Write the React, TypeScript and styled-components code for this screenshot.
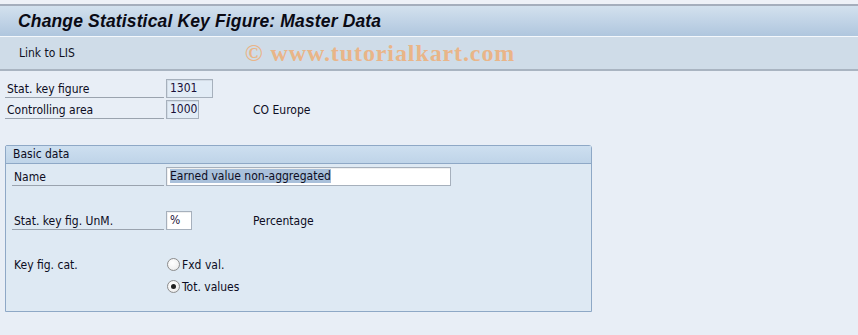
import styled, { createGlobalStyle } from 'styled-components'

const GlobalStyle = createGlobalStyle`
  html, body {
    margin: 0;
    padding: 0;
    background: #e8eef6;
  }
  body {
    font-family: Tahoma, "DejaVu Sans Condensed", "Liberation Sans", sans-serif;
    font-size: 12px;
    color: #0c0c22;
  }
`

const Page = styled.div`
  width: 858px;
  height: 335px;
  overflow: hidden;
  background: #e8eef6;
  display: flex;
  flex-direction: column;
`

const TopStrip = styled.div`
  height: 4px;
  background: #eef1f7;
  border-bottom: 2px solid #a5aebc;
`

const TitleBar = styled.div`
  height: 30px;
  display: flex;
  align-items: center;
  padding-left: 18px;
  background: linear-gradient(180deg, #d3e1ee 0%, #afc6de 100%);
  border-bottom: 1px solid #f4f8fc;
`

const Title = styled.h1`
  margin: 0;
  font-family: "Liberation Sans", Arial, sans-serif;
  font-size: 17.5px;
  font-weight: 700;
  font-style: italic;
  color: #0a0a14;
  letter-spacing: 0.15px;
`

const Toolbar = styled.div`
  height: 32px;
  display: flex;
  align-items: center;
  padding-left: 19px;
  background: #cfdce8;
  border-bottom: 2px solid #a9b4c1;
`

const ToolButton = styled.span`
  font-family: "DejaVu Sans Condensed", "Liberation Sans", sans-serif;
  font-size: 12px;
  color: #10101e;
`

const Watermark = styled.span`
  margin-left: 170px;
  font-family: "Liberation Serif", "Times New Roman", serif;
  font-weight: 700;
  font-size: 24px;
  letter-spacing: 0.9px;
  color: #e9b588;
`

const Content = styled.div`
  padding: 8px 0 0 5px;
  display: flex;
  flex-direction: column;
  gap: 2px;
`

const Row = styled.div`
  display: flex;
  align-items: center;
  height: 19px;
`

const Label = styled.div<{ $w: number; $plain?: boolean }>`
  width: ${p => p.$w}px;
  height: 19px;
  box-sizing: border-box;
  padding: 1px 0 0 2px;
  line-height: 18px;
  font-family: "DejaVu Sans Condensed", "Liberation Sans", sans-serif;
  font-size: 12px;
  border-bottom: 1px solid ${p => (p.$plain ? 'transparent' : '#9aa3ae')};
  flex-shrink: 0;
`

const Field = styled.div<{ $w: number; $white?: boolean }>`
  width: ${p => p.$w}px;
  height: 19px;
  box-sizing: border-box;
  margin-left: 2px;
  padding: 0 3px;
  line-height: 17px;
  font-family: "DejaVu Sans Condensed", "Liberation Sans", sans-serif;
  font-size: 12px;
  color: #1a1038;
  background: ${p => (p.$white ? '#ffffff' : '#e2ecf6')};
  border: 1px solid #a6b0bc;
  box-shadow: inset 1px 1px 0 ${p => (p.$white ? '#f0f0f0' : '#d3dce6')};
  flex-shrink: 0;
  white-space: nowrap;
  overflow: hidden;
`

const Selected = styled.span`
  background: #a9c0da;
  color: #0c0c22;
`

const Description = styled.span<{ $offset: number }>`
  margin-left: ${p => p.$offset}px;
  font-family: "DejaVu Sans Condensed", "Liberation Sans", sans-serif;
  font-size: 12px;
`

const GroupBox = styled.div`
  margin-top: 24px;
  width: 587px;
  box-sizing: border-box;
  border: 1px solid #8ea8c6;
  border-radius: 2px 3px 0 0;
  background: #dee9f3;
  padding-bottom: 15px;
`

const GroupHeader = styled.div`
  height: 17px;
  line-height: 17px;
  padding-left: 7px;
  background: linear-gradient(180deg, #cddff0 0%, #bfd4e8 100%);
  border-bottom: 1px solid #8ea8c6;
  font-family: "DejaVu Sans Condensed", "Liberation Sans", sans-serif;
  font-size: 12px;
`

const GroupBody = styled.div`
  padding: 3px 0 0 6px;
  display: flex;
  flex-direction: column;
  gap: 3px;
`

const Spacer = styled.div`
  height: 19px;
`

const RadioOption = styled.label`
  display: flex;
  align-items: center;
  gap: 2px;
  margin-left: 3px;
  font-family: "DejaVu Sans Condensed", "Liberation Sans", sans-serif;
  font-size: 12px;
`

const RadioCircle = styled.span<{ $checked?: boolean }>`
  width: 11px;
  height: 11px;
  border-radius: 50%;
  border: 1px solid #8c8c8c;
  background: radial-gradient(circle at 40% 35%, #ffffff 0%, #f2f2f2 60%, #dcdcdc 100%);
  display: flex;
  align-items: center;
  justify-content: center;

  &::after {
    content: '';
    width: 5px;
    height: 5px;
    border-radius: 50%;
    background: ${p => (p.$checked ? '#202020' : 'transparent')};
  }
`

export default function App() {
  return (
    <>
      <GlobalStyle />
      <Page>
        <TopStrip />
        <TitleBar>
          <Title>Change Statistical Key Figure: Master Data</Title>
        </TitleBar>
        <Toolbar>
          <ToolButton>Link to LIS</ToolButton>
          <Watermark>© www.tutorialkart.com</Watermark>
        </Toolbar>
        <Content>
          <Row>
            <Label $w={159}>Stat. key figure</Label>
            <Field $w={47}>1301</Field>
          </Row>
          <Row>
            <Label $w={159}>Controlling area</Label>
            <Field $w={33}>1000</Field>
            <Description $offset={54}>CO Europe</Description>
          </Row>
          <GroupBox>
            <GroupHeader>Basic data</GroupHeader>
            <GroupBody>
              <Row>
                <Label $w={152}>Name</Label>
                <Field $w={285} $white>
                  <Selected>Earned value non-aggregated</Selected>
                </Field>
              </Row>
              <Spacer />
              <Row>
                <Label $w={152}>Stat. key fig. UnM.</Label>
                <Field $w={26} $white>%</Field>
                <Description $offset={61}>Percentage</Description>
              </Row>
              <Spacer />
              <Row>
                <Label $w={152} $plain>Key fig. cat.</Label>
                <RadioOption>
                  <RadioCircle />
                  Fxd val.
                </RadioOption>
              </Row>
              <Row>
                <Label $w={152} $plain />
                <RadioOption>
                  <RadioCircle $checked />
                  Tot. values
                </RadioOption>
              </Row>
            </GroupBody>
          </GroupBox>
        </Content>
      </Page>
    </>
  )
}
